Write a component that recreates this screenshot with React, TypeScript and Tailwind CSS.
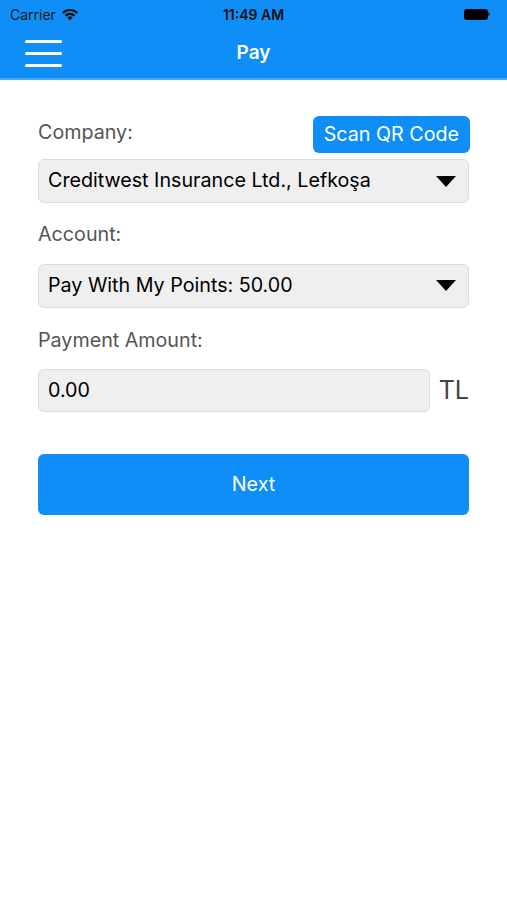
import React from 'react';

const font = { fontFamily: 'Inter, "Liberation Sans", sans-serif' };

function Caret() {
  return (
    <svg width="20" height="11" viewBox="0 0 20 11" className="shrink-0">
      <path d="M0 0 H20 L10 11 Z" fill="#000" />
    </svg>
  );
}

function Select({ value }: { value: string }) {
  return (
    <div className="flex items-center justify-between h-[44px] px-[9px] pr-[12px] bg-[#efefef] border border-[#dcdcdc] rounded-[6px]">
      <span className="text-[19.7px] text-black">{value}</span>
      <Caret />
    </div>
  );
}

export default function App() {
  return (
    <div className="min-h-[900px] w-[507px] bg-white" style={font}>
      <div className="bg-[#0f8ef7] text-white border-b-2 border-[#4aa9f5]">
        <div className="relative flex items-center justify-between h-[28px] px-[10px]">
          <div className="flex items-center gap-[5px] text-[14px] text-[#1a1a1a]">
            <span>Carrier</span>
            <svg width="18" height="13" viewBox="0 0 18 13">
              <path d="M9 12.5 L6.3 9.6 A3.9 3.9 0 0 1 11.7 9.6 Z" fill="#111" />
              <path d="M3.7 7 A7.5 7.5 0 0 1 14.3 7 L12.8 8.5 A5.4 5.4 0 0 0 5.2 8.5 Z" fill="#111" />
              <path d="M1 4.3 A11.3 11.3 0 0 1 17 4.3 L15.5 5.8 A9.2 9.2 0 0 0 2.5 5.8 Z" fill="#111" />
            </svg>
          </div>
          <span className="absolute left-1/2 -translate-x-1/2 text-[14px] font-semibold text-[#111]">11:49 AM</span>
          <div className="flex items-center mr-[7px]">
            <div className="w-[24px] h-[11px] rounded-[3px] bg-black" />
            <div className="w-[2px] h-[4px] bg-[#333] rounded-r-sm" />
          </div>
        </div>
        <div className="relative flex items-center h-[50px] px-[25px]">
          <div className="flex flex-col gap-[9px]">
            <div className="w-[37px] h-[3px] bg-white rounded-full" />
            <div className="w-[37px] h-[3px] bg-white rounded-full" />
            <div className="w-[37px] h-[3px] bg-white rounded-full" />
          </div>
          <span className="absolute left-1/2 -translate-x-1/2 text-[19px] font-semibold">Pay</span>
        </div>
      </div>

      <div className="px-[38px] pt-[36px]">
        <div className="flex items-end justify-between">
          <span className="text-[19.7px] text-[#555] mb-[5px]">Company:</span>
          <button className="h-[37px] px-[11px] bg-[#0f8ef7] text-white text-[19.7px] rounded-[6px] mr-[-1px]">
            Scan QR Code
          </button>
        </div>
        <div className="mt-[6px]">
          <Select value="Creditwest Insurance Ltd., Lefkoşa" />
        </div>

        <div className="text-[19.7px] text-[#555] mt-[17px]">Account:</div>
        <div className="mt-[14px]">
          <Select value="Pay With My Points: 50.00" />
        </div>

        <div className="text-[19.7px] text-[#555] mt-[18px]">Payment Amount:</div>
        <div className="flex items-center gap-[9px] mt-[14px]">
          <div className="flex-1 flex items-center h-[43px] px-[9px] bg-[#efefef] border border-[#dcdcdc] rounded-[6px]">
            <span className="text-[19.7px] text-black">0.00</span>
          </div>
          <span className="text-[25px] text-[#444]">TL</span>
        </div>

        <button className="mt-[42px] w-full h-[61px] bg-[#0f8ef7] text-white text-[19.7px] rounded-[6px]">
          Next
        </button>
      </div>
    </div>
  );
}
